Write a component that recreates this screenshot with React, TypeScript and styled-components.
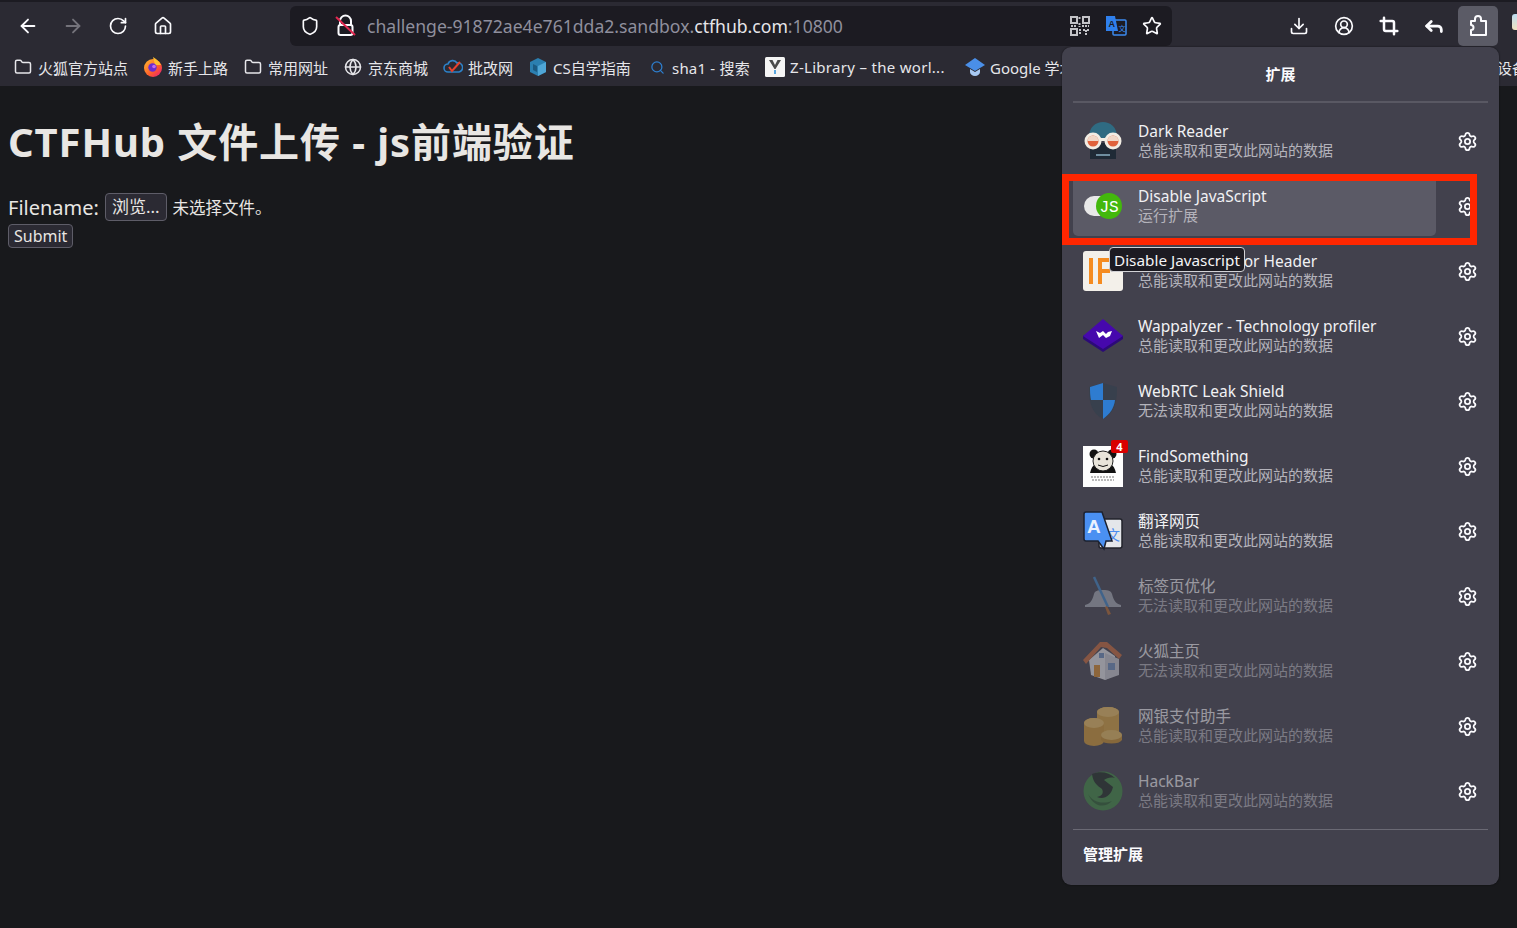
import { type FC, type ReactNode } from 'react'
import styled, { createGlobalStyle } from 'styled-components'
import {
  ArrowLeft,
  ArrowRight,
  CircleUserRound,
  Crop,
  Download,
  Folder,
  Globe,
  Home,
  Reply,
  RotateCw,
  Search,
  Settings,
  Shield,
  Star
} from 'lucide-react'

const GlobalStyle = createGlobalStyle`
  html, body {
    margin: 0;
    height: 100%;
    overflow: hidden;
    background: #18191c;
    font-family: "Noto Sans", "Noto Sans CJK SC", sans-serif;
  }
`

const Page = styled.div`
  position: relative;
  width: 1517px;
  height: 928px;
  overflow: hidden;
  background: #18191c;
  color: #e8e6e3;
`

const Toolbar = styled.div`
  height: 40px;
  padding: 4px 0 0 5px;
  display: flex;
  align-items: stretch;
  background: #2b2a33;
  border-top: 2px solid #1c1b22;
  overflow: hidden;
`

const NavGroup = styled.div`
  display: flex;
  align-items: center;
  height: 40px;
`

const ToolButton = styled.div<{ $dim?: boolean }>`
  width: 45px;
  height: 40px;
  flex: none;
  display: flex;
  align-items: center;
  justify-content: center;
  color: ${props => (props.$dim ? '#74737b' : '#fbfbfe')};
`

const UrlBar = styled.div`
  width: 882px;
  height: 40px;
  margin-left: 105px;
  flex: none;
  padding: 0 10px;
  box-sizing: border-box;
  display: flex;
  align-items: center;
  background: #1c1b22;
  border-radius: 6px;
  color: #fbfbfe;
`

const LockSlot = styled.div`
  margin-left: 15px;
  display: flex;
`

const UrlText = styled.div`
  margin-left: 10px;
  flex: 1;
  font-size: 17.6px;
  white-space: nowrap;
  color: #8f8f9d;
`

const UrlHost = styled.span`
  color: #e6e6ea;
`

const UrlActions = styled.div`
  display: flex;
  align-items: center;
  gap: 15px;
`

const ActionGroup = styled.div`
  margin-left: 104px;
  display: flex;
  align-items: center;
  height: 40px;
`

const ExtensionsButton = styled.div`
  width: 40px;
  height: 40px;
  flex: none;
  margin-left: 2px;
  display: flex;
  align-items: center;
  justify-content: center;
  border-radius: 5px;
  background: #5b5b66;
  color: #fbfbfe;
`

const OverflowIcon = styled.div`
  width: 12px;
  height: 16px;
  margin: -8px 0 0 14px;
  flex: none;
  border-radius: 3px;
  background: linear-gradient(#bcdcf0, #f0e2c0);
`

const BookmarkBar = styled.div`
  height: 38px;
  padding: 2px 0 0 13px;
  display: flex;
  align-items: center;
  background: #2b2a33;
  overflow: hidden;
`

const Bookmark = styled.div<{ $width: number, $spacing?: number }>`
  width: ${props => props.$width}px;
  flex: none;
  display: flex;
  align-items: center;
  gap: 5px;
  font-size: 15px;
  letter-spacing: ${props => props.$spacing ?? 0}px;
  color: #e6e6ea;
  white-space: nowrap;
`

const BookmarkIcon = styled.span`
  width: 20px;
  height: 20px;
  flex: none;
  display: flex;
  align-items: center;
  justify-content: center;
  color: #e6e6ea;
`

const Content = styled.main`
  padding: 0 8px;
`

const Heading = styled.h1`
  margin: 0;
  padding-top: 27px;
  font-size: 40px;
  line-height: 58px;
  font-weight: 700;
  letter-spacing: 0.9px;
  color: #e8e6e3;
`

const UploadForm = styled.form`
  margin-top: 21px;
`

const FieldLine = styled.div`
  height: 30px;
  display: flex;
  align-items: center;
  font-size: 20px;
`

const FormButton = styled.button`
  margin: 0;
  padding: 0 6px;
  font-family: inherit;
  font-size: 16px;
  line-height: 20px;
  color: #e8e6e3;
  background: #2b2a33;
  border: 1px solid #5e5d68;
  border-radius: 4px;
`

const BrowseButton = styled(FormButton)`
  height: 28px;
  margin-left: 6px;
  font-size: 17px;
`

const FileState = styled.span`
  margin-left: 6px;
  font-size: 16.5px;
`

const SubmitButton = styled(FormButton)`
  display: block;
  height: 24px;
  margin-top: 2px;
  padding: 0 5px;
`

const Panel = styled.aside`
  position: absolute;
  left: 1062px;
  top: 47px;
  width: 437px;
  height: 838px;
  display: flex;
  flex-direction: column;
  background: #42414d;
  border-radius: 9px;
  color: #fbfbfe;
  box-shadow: 0 0 2px rgba(0, 0, 0, 0.6);
`

const PanelTitle = styled.div`
  height: 56px;
  margin: 0 11px;
  padding-bottom: 2px;
  display: flex;
  align-items: center;
  justify-content: center;
  font-size: 15px;
  font-weight: 700;
  border-bottom: 2px solid #595863;
  box-sizing: border-box;
`

const ExtensionList = styled.div`
  flex: 1;
  padding: 5px 11px 0;
`

const ExtensionRow = styled.div`
  height: 65px;
  display: flex;
  align-items: center;
`

const ExtensionMain = styled.div<{ $active?: boolean, $off?: boolean }>`
  flex: 1;
  height: 61px;
  margin-right: 10px;
  padding-left: 10px;
  display: flex;
  align-items: center;
  gap: 15px;
  border-radius: 5px;
  background: ${props => (props.$active ? '#5b5a66' : 'transparent')};
  opacity: ${props => (props.$off ? 0.5 : 1)};
`

const IconSlot = styled.div`
  position: relative;
  width: 40px;
  height: 40px;
  flex: none;
`

const Badge = styled.span`
  position: absolute;
  right: -5px;
  top: -6px;
  width: 17px;
  height: 13px;
  background: #d90000;
  border-radius: 2px;
  color: #fff;
  font-size: 11px;
  line-height: 13px;
  font-weight: 700;
  text-align: center;
`

const Labels = styled.div`
  display: flex;
  flex-direction: column;
`

const ExtensionName = styled.div`
  font-size: 15.5px;
  line-height: 19px;
  color: #f1f1f4;
`

const ExtensionNote = styled.div`
  font-size: 15px;
  line-height: 19px;
  color: #b4b3bb;
`

const GearButton = styled.div`
  width: 42px;
  flex: none;
  margin-top: 2px;
  display: flex;
  justify-content: center;
  color: #fbfbfe;
`

const PanelFooter = styled.div`
  height: 56px;
  margin: 0 11px;
  padding: 0 0 8px 10px;
  display: flex;
  align-items: center;
  font-size: 15px;
  font-weight: 700;
  border-top: 1px solid #6a6974;
  box-sizing: border-box;
`

const RedMark = styled.div`
  position: absolute;
  left: 0;
  top: 127px;
  width: 415px;
  height: 71px;
  box-sizing: border-box;
  border: 7px solid #ff2600;
  pointer-events: none;
`

const Tip = styled.div`
  position: absolute;
  left: 47px;
  top: 200px;
  height: 25px;
  padding: 0 4px;
  display: flex;
  align-items: center;
  font-size: 15.3px;
  white-space: nowrap;
  color: #f4f4f6;
  background: #1c1b22;
  border: 1px solid #d2d2d6;
  border-radius: 4px;
  box-sizing: border-box;
`

const InsecureLock: FC = () => (
  <svg width="22" height="24" viewBox="0 0 22 24" fill="none">
    <path d="M5 11V7a5.5 5.5 0 0 1 11 0v4" stroke="#fbfbfe" strokeWidth="2" />
    <rect x="3.5" y="11" width="14" height="10" rx="2" stroke="#fbfbfe" strokeWidth="2" />
    <path d="M1 3l19 18" stroke="#e22850" strokeWidth="2" />
  </svg>
)

const QrIcon: FC = () => (
  <svg width="20" height="20" viewBox="0 0 20 20" fill="none" stroke="#c4c4c8" strokeWidth="2">
    <rect x="1" y="1" width="6" height="6" />
    <rect x="13" y="1" width="6" height="6" />
    <rect x="1" y="13" width="6" height="6" />
    <path d="M9.5 1v3M9.500 7v4M1 10h6M12 10h7M10 13v6M13 14h3v5M18 13v3" strokeDasharray="2 1" />
  </svg>
)

const TranslateSmall: FC = () => (
  <svg width="22" height="20" viewBox="0 0 22 20">
    <rect x="8" y="4" width="13" height="15" rx="1" fill="none" stroke="#3b8bf0" strokeWidth="1.5" />
    <path d="M1 0h9l3 15H1z" fill="#2f80ed" />
    <text x="3.5" y="11" fontSize="9" fontWeight="700" fill="#1c1b22" fontFamily="Liberation Sans">A</text>
    <text x="13.5" y="15" fontSize="7" fill="#3b8bf0" fontFamily="Noto Sans CJK SC">文</text>
  </svg>
)

const ExtensionsPuzzle: FC = () => (
  <svg width="20" height="22" viewBox="0 0 20 22" fill="none" stroke="#fbfbfe" strokeWidth="2" strokeLinejoin="round">
    <path d="M7 6V4a3 3 0 0 1 6 0v2h5v14H3v-5a2.5 2.5 0 0 0 0-5V6z" />
  </svg>
)

const FirefoxIcon: FC = () => (
  <svg width="20" height="20" viewBox="0 0 20 20">
    <defs>
      <linearGradient id="fx" x1="0" y1="0" x2="1" y2="1">
        <stop offset="0" stopColor="#ffbd2e" />
        <stop offset="0.6" stopColor="#ff5a2c" />
        <stop offset="1" stopColor="#e31587" />
      </linearGradient>
    </defs>
    <circle cx="10" cy="11" r="9" fill="url(#fx)" />
    <path d="M10 0c3 2 6 4 8 8l-6 0z" fill="#ffbd2e" />
    <circle cx="9.5" cy="10.5" r="4.2" fill="#6d2bd0" />
    <circle cx="11" cy="9.5" r="1.8" fill="#c06bf0" />
  </svg>
)

const CloudCheckIcon: FC = () => (
  <svg width="20" height="16" viewBox="0 0 20 16" fill="none">
    <path d="M5 13a4 4 0 0 1 0-8 5 5 0 0 1 9-1 4.5 4.5 0 0 1 2 9z" stroke="#2d82c9" strokeWidth="1.6" />
    <path d="M6 8l3 4 8-9" stroke="#e8412c" strokeWidth="2" />
  </svg>
)

const CubeIcon: FC = () => (
  <svg width="16" height="18" viewBox="0 0 16 18">
    <path d="M8 0l8 4v10l-8 4-8-4V4z" fill="#2b7fb0" />
    <path d="M8 8l8-4v10l-8 4z" fill="#4fa6d6" />
    <path d="M3 6l4 2v6l-4-2z" fill="#1b5a82" />
  </svg>
)

const ZLibIcon: FC = () => (
  <svg width="20" height="20" viewBox="0 0 20 20">
    <rect width="20" height="20" rx="1.5" fill="#f5f5f5" />
    <path d="M4 3l5.5 9h1L16 3h-3.5L10 8 7.5 3z" fill="#4b4b4b" />
    <rect x="9" y="13" width="2" height="4" fill="#5aa7e0" />
  </svg>
)

const CapIcon: FC = () => (
  <svg width="20" height="20" viewBox="0 0 20 20">
    <path d="M10 1l10 7-10 6L0 8z" fill="#4a8fe8" />
    <path d="M5 12l5 3 5-3v3a5 4 0 0 1-10 0z" fill="#a8c9f2" />
  </svg>
)

const DarkReaderIcon: FC = () => (
  <svg viewBox="0 0 40 40" width="40" height="40">
    <path d="M6 16C6 6 13 1 20 1s14 5 14 15v4H6z" fill="#2f6b82" />
    <path d="M7 22h26v16H7z" fill="#1f2a36" />
    <circle cx="10" cy="20" r="8.5" fill="#f2ede4" />
    <circle cx="30" cy="20" r="8.5" fill="#f2ede4" />
    <rect x="17" y="17" width="6" height="3" fill="#f2ede4" />
    <circle cx="10" cy="20" r="5.5" fill="#e0623c" />
    <circle cx="30" cy="20" r="5.5" fill="#e0623c" />
    <path d="M4.5 20a5.5 5.5 0 0 1 11 0z" fill="#f0d8c8" />
    <path d="M24.5 20a5.5 5.5 0 0 1 11 0z" fill="#f0d8c8" />
    <rect x="13" y="33" width="14" height="2" fill="#6f8ea0" />
  </svg>
)

const ToggleJsIcon: FC = () => (
  <svg viewBox="0 0 40 40" width="40" height="40">
    <rect x="1" y="10" width="32" height="20" rx="10" fill="#e8e8e8" />
    <circle cx="26" cy="20" r="13" fill="#43b80c" />
    <text x="26" y="26" textAnchor="middle" fontSize="16" fill="#fff" fontFamily="Liberation Mono">JS</text>
  </svg>
)

const HeaderIcon: FC = () => (
  <svg viewBox="0 0 40 40" width="40" height="40">
    <rect width="40" height="40" rx="3" fill="#f3f0ea" />
    <rect x="6" y="7" width="4" height="26" fill="#f58b1f" />
    <path d="M15 7h14v4H19v7h8v4h-8v11h-4z" fill="#f58b1f" />
  </svg>
)

const WappalyzerIcon: FC = () => (
  <svg viewBox="0 0 40 40" width="40" height="40">
    <path d="M20 7l20 13v3L20 36 0 23v-3z" fill="#2c0a78" />
    <path d="M20 3l20 17-20 13L0 20z" fill="#4608ad" />
    <path d="M13 15l3 7 4-3 3 3 4-2 2-5-4 1-2 2-3-3-3 2z" fill="#fff" />
  </svg>
)

const ShieldIcon: FC = () => (
  <svg viewBox="0 0 40 40" width="40" height="40">
    <path d="M20 2l14 4c0 14-2 26-14 32C8 32 6 20 6 6z" fill="#38404d" />
    <path d="M20 2v17H8c-1-4-1-9-1-13z" fill="#2e7cd0" />
    <path d="M20 19h12c-1 8-5 14-12 19z" fill="#2e7cd0" />
  </svg>
)

const PandaIcon: FC = () => (
  <svg viewBox="0 0 40 41" width="40" height="41">
    <rect width="40" height="41" fill="#fdfdfd" />
    <circle cx="11" cy="8" r="4.5" fill="#111" />
    <circle cx="29" cy="8" r="4.5" fill="#111" />
    <path d="M7 27c1-5 3-8 6-9h14c3 1 5 4 6 9z" fill="#111" />
    <circle cx="20" cy="15" r="10" fill="#e8e4da" stroke="#222" />
    <circle cx="16" cy="13" r="1.3" fill="#111" />
    <circle cx="24" cy="13" r="1.3" fill="#111" />
    <path d="M15 19q5 3 10 0" stroke="#111" fill="none" />
    <path d="M8 31h24M9 34h22" stroke="#777" strokeWidth="1.2" strokeDasharray="2 1" />
  </svg>
)

const TranslateIcon: FC = () => (
  <svg viewBox="0 0 40 40" width="40" height="40">
    <rect x="16" y="8" width="23" height="29" rx="2" fill="#e4e6ea" stroke="#22232b" strokeWidth="1.5" />
    <text x="23" y="29" fontSize="14" fill="#4a8cf0" fontFamily="Noto Sans CJK SC">文</text>
    <path d="M3 1h16l10 29-6 0-2 8-6-8H3a2 2 0 0 1-2-2V3a2 2 0 0 1 2-2z" fill="#4a90f2" stroke="#1c2230" strokeWidth="1.5" />
    <text x="4" y="22" fontSize="19" fontWeight="700" fill="#eaf2ff" fontFamily="Liberation Sans">A</text>
  </svg>
)

const HatIcon: FC = () => (
  <svg viewBox="0 0 40 40" width="40" height="40">
    <path d="M2 29c4-1 7-3 9-11 1-3 3-4 9-4s8 1 9 4c2 8 5 10 9 11v2H2z" fill="#a6acb6" />
    <path d="M11 1l14 30" stroke="#3f86c7" strokeWidth="2.5" />
    <path d="M24 30l4 8-3 1-3-8z" fill="#b5692e" />
  </svg>
)

const HouseIcon: FC = () => (
  <svg viewBox="0 0 40 40" width="40" height="40">
    <path d="M6 19L20 7l12 8v19l-10 5-14-5z" fill="#e6e6ea" />
    <path d="M0 19L17 1h7l15 13-3 4-12-11-6-1L3 23z" fill="#c96a3a" />
    <path d="M22 12l14 6v16l-14 5z" fill="#c9cbd2" />
    <rect x="11" y="24" width="6" height="12" fill="#d88c2c" />
    <rect x="25" y="22" width="7" height="7" fill="#6e8fc0" />
    <rect x="16" y="12" width="5" height="5" fill="#6e8fc0" />
  </svg>
)

const CoinsIcon: FC = () => (
  <svg viewBox="0 0 40 40" width="40" height="40">
    <path d="M14 6a11 5 0 0 1 22 0v20H14z" fill="#d9a43c" />
    <ellipse cx="25" cy="6" rx="11" ry="5" fill="#edc061" />
    <path d="M1 17a10 5 0 0 1 20 0v18a10 5 0 0 1-20 0z" fill="#d39a33" />
    <ellipse cx="11" cy="17" rx="10" ry="5" fill="#edc061" />
    <path d="M18 29a11 5 0 0 1 21 0v5a11 5 0 0 1-21 0z" fill="#c98f2b" />
    <ellipse cx="28.5" cy="29" rx="10.5" ry="5" fill="#e9bd5d" />
  </svg>
)

const HackBarIcon: FC = () => (
  <svg viewBox="0 0 40 40" width="40" height="40">
    <circle cx="20" cy="20" r="19.5" fill="#3f8a42" />
    <path d="M9 3c8-3 17-2 23 4-5-1-8 0-11 2l9 7c-2 9-9 13-16 10 5-1 7-4 5-8-4-3-9-6-10-15z" fill="#1e2a22" />
    <path d="M5 23c4 7 13 11 24 7-7 7-18 7-24-7z" fill="#2a5f2e" />
  </svg>
)

interface Extension {
  name: string
  note: string
  icon: ReactNode
  active?: boolean
  off?: boolean
  badge?: string
}

const ALL_DATA = '总能读取和更改此网站的数据'
const NO_DATA = '无法读取和更改此网站的数据'

const extensions: Extension[] = [
  { name: 'Dark Reader', note: ALL_DATA, icon: <DarkReaderIcon /> },
  { name: 'Disable JavaScript', note: '运行扩展', icon: <ToggleJsIcon />, active: true },
  { name: 'X-Forwarded-For Header', note: ALL_DATA, icon: <HeaderIcon /> },
  { name: 'Wappalyzer - Technology profiler', note: ALL_DATA, icon: <WappalyzerIcon /> },
  { name: 'WebRTC Leak Shield', note: NO_DATA, icon: <ShieldIcon /> },
  { name: 'FindSomething', note: ALL_DATA, icon: <PandaIcon />, badge: '4' },
  { name: '翻译网页', note: ALL_DATA, icon: <TranslateIcon /> },
  { name: '标签页优化', note: NO_DATA, icon: <HatIcon />, off: true },
  { name: '火狐主页', note: NO_DATA, icon: <HouseIcon />, off: true },
  { name: '网银支付助手', note: ALL_DATA, icon: <CoinsIcon />, off: true },
  { name: 'HackBar', note: ALL_DATA, icon: <HackBarIcon />, off: true }
]

const bookmarks: Array<{ label: string, icon: ReactNode, width: number, spacing?: number }> = [
  { label: '火狐官方站点', icon: <Folder size={18} />, width: 130 },
  { label: '新手上路', icon: <FirefoxIcon />, width: 100 },
  { label: '常用网址', icon: <Folder size={18} />, width: 100 },
  { label: '京东商城', icon: <Globe size={18} />, width: 100 },
  { label: '批改网', icon: <CloudCheckIcon />, width: 85 },
  { label: 'CS自学指南', icon: <CubeIcon />, width: 119 },
  { label: 'sha1 - 搜索', icon: <Search size={15} color="#2d7fd0" />, width: 118, spacing: 0.2 },
  { label: 'Z-Library – the worl...', icon: <ZLibIcon />, width: 200, spacing: 0.3 },
  { label: 'Google 学术', icon: <CapIcon />, width: 477 },
  { label: '移动设备', icon: <Folder size={18} />, width: 90 }
]

const App: FC = () => (
  <Page>
    <GlobalStyle />
    <Toolbar>
      <NavGroup>
        <ToolButton><ArrowLeft size={22} /></ToolButton>
        <ToolButton $dim><ArrowRight size={22} /></ToolButton>
        <ToolButton><RotateCw size={20} /></ToolButton>
        <ToolButton><Home size={20} /></ToolButton>
      </NavGroup>
      <UrlBar>
        <Shield size={20} />
        <LockSlot><InsecureLock /></LockSlot>
        <UrlText>
          challenge-91872ae4e761dda2.sandbox.<UrlHost>ctfhub.com</UrlHost>:10800
        </UrlText>
        <UrlActions>
          <QrIcon />
          <TranslateSmall />
          <Star size={20} />
        </UrlActions>
      </UrlBar>
      <ActionGroup>
        <ToolButton><Download size={20} /></ToolButton>
        <ToolButton><CircleUserRound size={20} /></ToolButton>
        <ToolButton><Crop size={20} strokeWidth={3} /></ToolButton>
        <ToolButton><Reply size={22} strokeWidth={3} /></ToolButton>
        <ExtensionsButton><ExtensionsPuzzle /></ExtensionsButton>
        <OverflowIcon />
      </ActionGroup>
    </Toolbar>
    <BookmarkBar>
      {bookmarks.map(item => (
        <Bookmark key={item.label} $width={item.width} $spacing={item.spacing}>
          <BookmarkIcon>{item.icon}</BookmarkIcon>
          {item.label}
        </Bookmark>
      ))}
    </BookmarkBar>
    <Content>
      <Heading>CTFHub 文件上传 - js前端验证</Heading>
      <UploadForm>
        <FieldLine>
          Filename:
          <BrowseButton type="button">浏览...</BrowseButton>
          <FileState>未选择文件。</FileState>
        </FieldLine>
        <SubmitButton type="button">Submit</SubmitButton>
      </UploadForm>
    </Content>
    <Panel>
      <PanelTitle>扩展</PanelTitle>
      <ExtensionList>
        {extensions.map(item => (
          <ExtensionRow key={item.name}>
            <ExtensionMain $active={item.active} $off={item.off}>
              <IconSlot>
                {item.icon}
                {item.badge && <Badge>{item.badge}</Badge>}
              </IconSlot>
              <Labels>
                <ExtensionName>{item.name}</ExtensionName>
                <ExtensionNote>{item.note}</ExtensionNote>
              </Labels>
            </ExtensionMain>
            <GearButton><Settings size={21} /></GearButton>
          </ExtensionRow>
        ))}
      </ExtensionList>
      <PanelFooter>管理扩展</PanelFooter>
      <RedMark />
      <Tip>Disable Javascript</Tip>
    </Panel>
  </Page>
)

export default App
